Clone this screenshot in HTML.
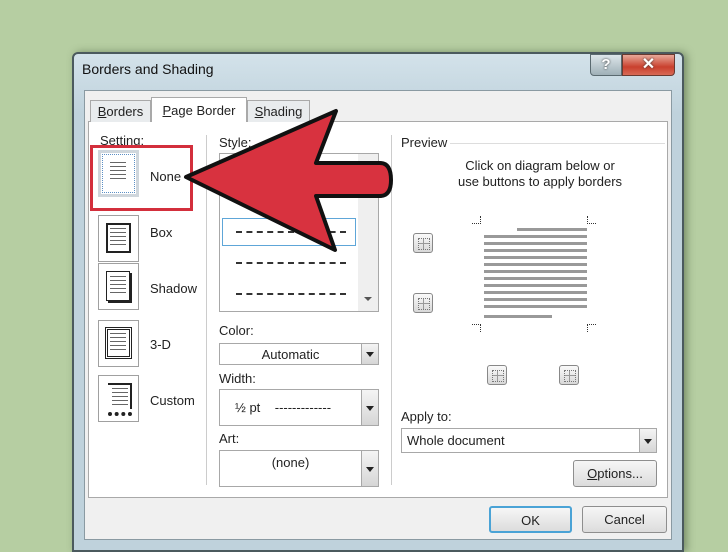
<!DOCTYPE html>
<html><head><meta charset="utf-8"><style>
*{box-sizing:border-box;margin:0;padding:0}
body{width:728px;height:546px;overflow:hidden;background:#b6cea2;font-family:"Liberation Sans",sans-serif;font-size:13px;color:#222;position:relative}
.a{position:absolute}
.win{left:72px;top:52px;width:612px;height:500px;background:linear-gradient(#d3e2ea,#bfd2dc 60px);border:2px solid #4b5a5e;border-radius:6px 6px 0 0;box-shadow:3px 0 8px rgba(60,80,50,.5)}
.client{left:84px;top:90px;width:588px;height:450px;background:#f0f0f0;border:1px solid #8a9aa2}
.panel{left:88px;top:121px;width:580px;height:377px;background:#fff;border:1px solid #a9a9a9}
.tab{top:100px;height:22px;border:1px solid #a9a9a9;border-bottom:none;background:#e9ecee;text-align:center;line-height:22px;font-size:13px}
.ib{width:41px;height:47px;border:1px solid #a0a0a0;background:#fff}
.lbl{font-size:13px}
.dd{border:1px solid #a8a8a8;background:#fff}
.arrowbtn{position:absolute;right:0;top:0;bottom:0;width:17px;background:linear-gradient(#f4f4f4,#d6d6d6);border-left:1px solid #a8a8a8}
.arrowbtn:after{content:"";position:absolute;left:4px;top:50%;margin-top:-2px;border:4px solid transparent;border-top:5px solid #222;border-bottom:none}
.btn{border:1px solid #8e8e8e;border-radius:3px;background:linear-gradient(#f6f6f6,#dcdcdc);text-align:center;font-size:13px}
.pb{width:20px;height:20px;border:1px solid #888;border-radius:3px;background:linear-gradient(#fafafa,#d8d8d8)}
.pb:after{content:"";position:absolute;left:4px;top:4px;width:10px;height:10px;border:1px dotted #777;background:linear-gradient(90deg,transparent 4px,#999 4px,#999 5px,transparent 5px),linear-gradient(transparent 4px,#999 4px,#999 5px,transparent 5px)}
.tl{position:absolute;width:16px;height:20px;background:repeating-linear-gradient(#666 0 1px,transparent 1px 4px)}
.pl{position:absolute;height:3px;background:#999}
</style></head><body>
<div class="a win"></div>
<div class="a" style="left:82px;top:61px;font-size:14px;color:#111">Borders and Shading</div>
<div class="a" style="left:590px;top:54px;width:32px;height:22px;background:linear-gradient(#dde6ea,#9fb0b7);border:1px solid #5a6a70;border-radius:0 0 0 4px;text-align:center;font-weight:bold;color:#fff;line-height:20px;font-size:15px;text-shadow:0 0 2px #333">?</div>
<div class="a" style="left:622px;top:54px;width:53px;height:22px;background:linear-gradient(#e8a99a,#c9402e 60%,#d86a55);border:1px solid #6a3a30;border-radius:0 0 4px 0;text-align:center;font-weight:bold;color:#fff;line-height:20px;font-size:16px;text-shadow:0 0 2px #333">✕</div>
<div class="a client"></div>
<div class="a panel"></div>
<div class="a tab" style="left:90px;width:61px"><u>B</u>orders</div>
<div class="a tab" style="left:151px;width:96px;top:97px;height:25px;background:#fff;line-height:26px"><u>P</u>age Border</div>
<div class="a tab" style="left:247px;width:63px"><u>S</u>hading</div>
<div class="a lbl" style="left:100px;top:133px">Setting:</div>
<div class="a" style="left:206px;top:135px;width:1px;height:350px;background:#ccc"></div>
<div class="a" style="left:391px;top:135px;width:1px;height:350px;background:#ccc"></div>
<div class="a" style="left:90px;top:145px;width:103px;height:66px;border:3px solid #d32f3c"></div>
<div class="a ib" style="left:98px;top:150px;border:3px solid #cfd6dc;outline:1px dotted #5b8fc5;outline-offset:-5px"></div>
<div class="tl" style="left:110px;top:162px"></div>
<div class="a" style="left:150px;top:169px">None</div>
<div class="a ib" style="left:98px;top:215px"></div><div class="a" style="left:150px;top:225px">Box</div>
<div class="a ib" style="left:98px;top:263px"></div><div class="a" style="left:150px;top:281px">Shadow</div>
<div class="a ib" style="left:98px;top:320px"></div><div class="a" style="left:150px;top:337px">3-D</div>
<div class="a ib" style="left:98px;top:375px"></div><div class="a" style="left:150px;top:393px">Custom</div>
<div class="a" style="left:106px;top:223px;width:25px;height:30px;border:2px solid #222"></div>
<div class="tl" style="left:110px;top:228px"></div>
<div class="a" style="left:106px;top:271px;width:24px;height:30px;border:1px solid #222;box-shadow:2px 2px 0 #222"></div>
<div class="tl" style="left:110px;top:276px"></div>
<div class="a" style="left:105px;top:327px;width:27px;height:32px;border:3px double #222"></div>
<div class="tl" style="left:110px;top:333px"></div>
<div class="a" style="left:108px;top:383px;width:24px;height:26px;border-top:2px solid #222;border-right:2px solid #222"></div>
<div class="tl" style="left:112px;top:388px"></div>
<div class="a" style="left:108px;top:412px;width:24px;height:3px;border-bottom:4px dotted #222"></div>
<div class="a lbl" style="left:219px;top:135px">Style:</div>
<div class="a" style="left:219px;top:153px;width:160px;height:159px;border:1px solid #a8a8a8;background:#fff"></div>
<div class="a" style="left:358px;top:154px;width:20px;height:157px;background:#efefef"></div>
<div class="a" style="left:364px;top:297px;border:4px solid transparent;border-top:4px solid #555"></div>
<div class="a" style="left:222px;top:218px;width:134px;height:28px;border:1px solid #5ea6d8"></div>
<div class="a" style="left:236px;top:231px;width:110px;border-top:2px dashed #333"></div>
<div class="a" style="left:236px;top:262px;width:110px;border-top:2px dashed #333"></div>
<div class="a" style="left:236px;top:293px;width:110px;border-top:2px dashed #333"></div>
<div class="a lbl" style="left:219px;top:323px">Color:</div>
<div class="a dd" style="left:219px;top:343px;width:160px;height:22px"><div style="text-align:center;padding-right:17px;line-height:21px">Automatic</div><div class="arrowbtn"></div></div>
<div class="a lbl" style="left:219px;top:371px">Width:</div>
<div class="a dd" style="left:219px;top:389px;width:160px;height:37px"><div style="padding-left:15px;line-height:35px">½ pt &nbsp;&nbsp;&nbsp;-------------</div><div class="arrowbtn"></div></div>
<div class="a lbl" style="left:219px;top:431px">Art:</div>
<div class="a dd" style="left:219px;top:450px;width:160px;height:37px"><div style="text-align:center;padding-right:17px;line-height:24px">(none)</div><div class="arrowbtn"></div></div>
<div class="a lbl" style="left:401px;top:135px">Preview</div>
<div class="a" style="left:450px;top:143px;width:215px;height:1px;background:#ddd"></div>
<div class="a" style="left:440px;top:158px;width:200px;text-align:center;line-height:16px">Click on diagram below or<br>use buttons to apply borders</div>
<div class="a pb" style="left:413px;top:233px"></div>
<div class="a pb" style="left:413px;top:293px"></div>
<div class="a pb" style="left:487px;top:365px"></div>
<div class="a pb" style="left:559px;top:365px"></div>
<div class="a" style="left:472px;top:216px;width:9px;height:8px;border-right:1px dotted #333;border-bottom:1px dotted #333"></div>
<div class="a" style="left:587px;top:216px;width:9px;height:8px;border-left:1px dotted #333;border-bottom:1px dotted #333"></div>
<div class="a" style="left:472px;top:324px;width:9px;height:8px;border-right:1px dotted #333;border-top:1px dotted #333"></div>
<div class="a" style="left:587px;top:324px;width:9px;height:8px;border-left:1px dotted #333;border-top:1px dotted #333"></div>
<div class="pl" style="left:517px;top:228px;width:70px"></div>
<div class="a" style="left:484px;top:235px;width:103px;height:77px;background:repeating-linear-gradient(#999 0 3px,transparent 3px 7px)"></div>
<div class="pl" style="left:484px;top:315px;width:68px"></div>
<div class="a lbl" style="left:401px;top:409px">Apply to:</div>
<div class="a dd" style="left:401px;top:428px;width:256px;height:25px"><div style="padding-left:5px;line-height:24px">Whole document</div><div class="arrowbtn"></div></div>
<div class="a btn" style="left:573px;top:460px;width:84px;height:27px;line-height:25px"><u>O</u>ptions...</div>
<div class="a btn" style="left:489px;top:506px;width:83px;height:27px;line-height:25px;border:2px solid #4aa3d6">OK</div>
<div class="a btn" style="left:582px;top:506px;width:85px;height:27px;line-height:25px">Cancel</div>
<svg class="a" style="left:0;top:0" width="728" height="546"><path d="M186,177 L336,111 L316,163 L380,163 Q391,163 391,180 Q391,196 380,196 L316,196 L335,250 Z" fill="#d8323f" stroke="#111" stroke-width="4" stroke-linejoin="round"/></svg>
</body></html>
